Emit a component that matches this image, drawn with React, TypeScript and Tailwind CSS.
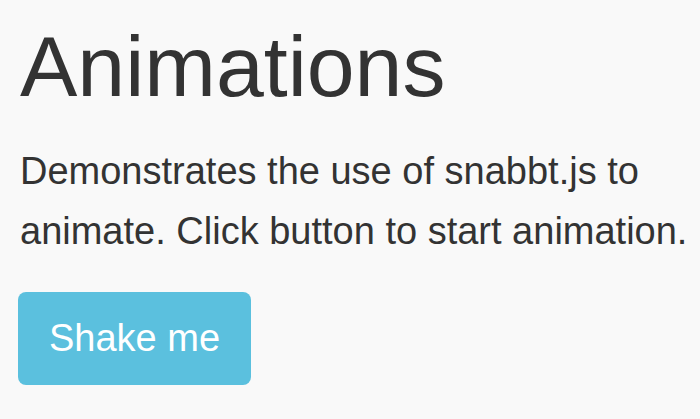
import { FC } from "react";

const App: FC = () => {
  return (
    <main className="min-h-[419px] w-full bg-[#f9f9f9] pl-[20px] pr-[8px] pt-[19px] text-[#333] font-['Liberation_Sans',Arial,sans-serif]">
      <h1 className="text-[86px] leading-[1.1] font-normal">Animations</h1>
      <p className="mt-[27px] text-[38px] leading-[60px]">
        Demonstrates the use of snabbt.js to animate. Click button to start
        animation.
      </p>
      <button
        type="button"
        className="mt-[31px] -ml-[2px] flex h-[93px] w-[233px] items-center justify-center rounded-[8px] bg-[#5bc0de] text-[38px] text-white"
      >
        Shake me
      </button>
    </main>
  );
};

export default App;
